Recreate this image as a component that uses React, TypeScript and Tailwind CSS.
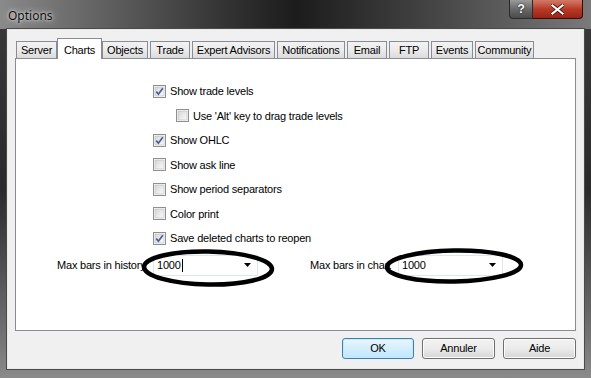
import React from "react";

function CheckBox({ checked }: { checked: boolean }) {
  return (
    <svg width="13" height="13" viewBox="0 0 13 13" className="shrink-0">
      <defs>
        <linearGradient id="cbg" x1="0" y1="0" x2="1" y2="1">
          <stop offset="0" stopColor="#d6d6d6" />
          <stop offset="1" stopColor="#fbfbfb" />
        </linearGradient>
      </defs>
      <rect x="0.5" y="0.5" width="12" height="12" fill="#ffffff" stroke="#8e8f8f" />
      <rect x="2" y="2" width="9" height="9" fill="url(#cbg)" stroke="#b6b6b6" strokeWidth="0.6" />
      {checked && (
        <path d="M3.3 6.6 L5.4 9.2 L9.8 3.2" fill="none" stroke="#4a5e9a" strokeWidth="1.7" />
      )}
    </svg>
  );
}

const tabs = [
  { name: "Server", w: "w-[41px]" },
  { name: "Charts", w: "w-[41px]", active: true },
  { name: "Objects", w: "w-[46px]" },
  { name: "Trade", w: "w-[40px]" },
  { name: "Expert Advisors", w: "w-[83px]" },
  { name: "Notifications", w: "w-[68px]" },
  { name: "Email", w: "w-[40px]" },
  { name: "FTP", w: "w-[40px]" },
  { name: "Events", w: "w-[42px]" },
  { name: "Community", w: "w-[59px]" },
];

const options = [
  { label: "Show trade levels", checked: true },
  { label: "Use 'Alt' key to drag trade levels", checked: false, indent: true },
  { label: "Show OHLC", checked: true },
  { label: "Show ask line", checked: false },
  { label: "Show period separators", checked: false },
  { label: "Color print", checked: false },
  { label: "Save deleted charts to reopen", checked: true },
];

function Combo({ caret }: { caret?: boolean }) {
  return (
    <div className="w-[105px] h-[21px] border border-[#dfe6ee] bg-white flex items-center pl-[3px] pr-[6px]">
      <span className="leading-none">1000</span>
      {caret && <span className="w-px h-[13px] bg-black ml-[1px]" />}
      <svg width="7" height="4" viewBox="0 0 7 4" className="ml-auto">
        <path d="M0 0 H7 L3.5 4 Z" fill="#000" />
      </svg>
    </div>
  );
}

function Btn({ label, primary, w }: { label: string; primary?: boolean; w: string }) {
  return (
    <div
      className={
        primary
          ? `${w} h-[21px] rounded-[3px] border border-[#3c7fb1] bg-gradient-to-b from-[#eaf6fd] to-[#bee6fd] flex items-center justify-center shadow-[inset_0_0_0_1px_#c6e9fb]`
          : `${w} h-[21px] rounded-[3px] border border-[#707070] bg-gradient-to-b from-[#f2f2f2] via-[#ebebeb] to-[#d6d6d6] flex items-center justify-center shadow-[inset_0_0_0_1px_#fcfcfc]`
      }
    >
      {label}
    </div>
  );
}

export default function App() {
  return (
    <div
      className="w-[591px] h-[378px] flex flex-col pb-[9px] bg-gradient-to-b from-[#3a3a3a] via-[#2a2a2a] to-[#8a8a8a] text-[11px] tracking-[-0.2px] text-black"
      style={{ fontFamily: "'Liberation Sans', Arial, sans-serif" }}
    >
      {/* Title bar */}
      <div className="h-[29px] flex items-start bg-gradient-to-r from-[#8a8a8a] via-[#1c1c1c] to-[#7a7a7a] shrink-0">
        <div
          className="pl-[8px] pt-[7px] text-[12px] tracking-normal text-[#111]"
          style={{ fontFamily: "'Noto Sans', 'Open Sans', sans-serif", textShadow: "0 0 6px #d8d8d8, 0 0 3px #e6e6e6" }}
        >
          Options
        </div>
        <div className="ml-auto mr-[8px] flex">
          <div className="w-[24px] h-[19px] rounded-bl-[4px] border border-[#2b2b2b] border-t-0 bg-gradient-to-b from-[#9a9a9a] via-[#6a6a6a] to-[#4a4a4a] flex items-center justify-center text-white font-bold text-[12px]" style={{ textShadow: "0 0 2px #000" }}>
            ?
          </div>
          <div className="w-[50px] h-[19px] rounded-br-[4px] border border-[#3b0c06] border-t-0 border-l-0 bg-gradient-to-b from-[#d07a68] via-[#b83a26] to-[#9a2414] flex items-center justify-center">
            <svg width="13" height="11" viewBox="0 0 13 11">
              <path d="M1 1 L12 10 M12 1 L1 10" stroke="#3a0a04" strokeWidth="3.6" strokeLinecap="square" />
              <path d="M1.5 1.5 L11.5 9.5 M11.5 1.5 L1.5 9.5" stroke="#ffffff" strokeWidth="2.2" strokeLinecap="square" />
            </svg>
          </div>
        </div>
      </div>

      {/* Client */}
      <div className="flex-1 mx-[7px] border border-[#e8e8e8] bg-[#f0f0f0] flex flex-col px-[7px] pt-[8px] shadow-[0_0_0_1px_#4a4a4a]">
        {/* Tabs */}
        <div className="h-[20px] flex items-end pl-[1px] relative z-10">
          {tabs.map((t) =>
            t.active ? (
              <div
                key={t.name}
                className="w-[45px] -mx-[2px] mr-0 h-[21px] -mb-px border border-b-0 border-[#898c95] bg-white flex items-start justify-center pt-[3px] relative z-10"
              >
                {t.name}
              </div>
            ) : (
              <div
                key={t.name}
                className={`${t.w} mr-[2px] h-[17px] border border-b-0 border-[#898c95] bg-gradient-to-b from-[#f2f2f2] via-[#ebebeb] to-[#dbdbdb] flex items-center justify-center`}
              >
                {t.name}
              </div>
            )
          )}
        </div>

        {/* Panel */}
        <div className="h-[273px] border border-[#898c95] bg-white relative flex flex-col">
          <div className="pt-[20px] pl-[137px] flex flex-col">
            {options.map((o) => (
              <div key={o.label} className={o.indent ? "h-[24.5px] flex items-center gap-[4px] pl-[23px]" : "h-[24.5px] flex items-center gap-[4px]"}>
                <CheckBox checked={o.checked} />
                <span>{o.label}</span>
              </div>
            ))}
          </div>
          <div className="mt-[4px] pl-[41px] flex items-center">
            <span className="w-[96px] whitespace-nowrap">Max bars in history</span>
            <Combo caret />
            <span className="w-[52px]" />
            <span className="w-[88px] whitespace-nowrap">Max bars in chart</span>
            <Combo />
          </div>

          {/* hand-drawn ellipses overlay */}
          <svg className="absolute left-[124px] top-[189px]" width="136" height="40" viewBox="0 0 136 40">
            <ellipse cx="68" cy="20" rx="64" ry="16.5" fill="none" stroke="#000" strokeWidth="4.5" transform="rotate(1 68 20)" />
          </svg>
          <svg className="absolute left-[367px] top-[188px]" width="142" height="38" viewBox="0 0 142 38">
            <ellipse cx="71" cy="19" rx="67" ry="15.5" fill="none" stroke="#000" strokeWidth="4.5" transform="rotate(-1 71 19)" />
          </svg>
        </div>

        {/* Buttons */}
        <div className="mt-[7px] flex justify-end gap-[8px]">
          <Btn label="OK" primary w="w-[72px]" />
          <Btn label="Annuler" w="w-[73px]" />
          <Btn label="Aide" w="w-[73px]" />
        </div>
      </div>
    </div>
  );
}
